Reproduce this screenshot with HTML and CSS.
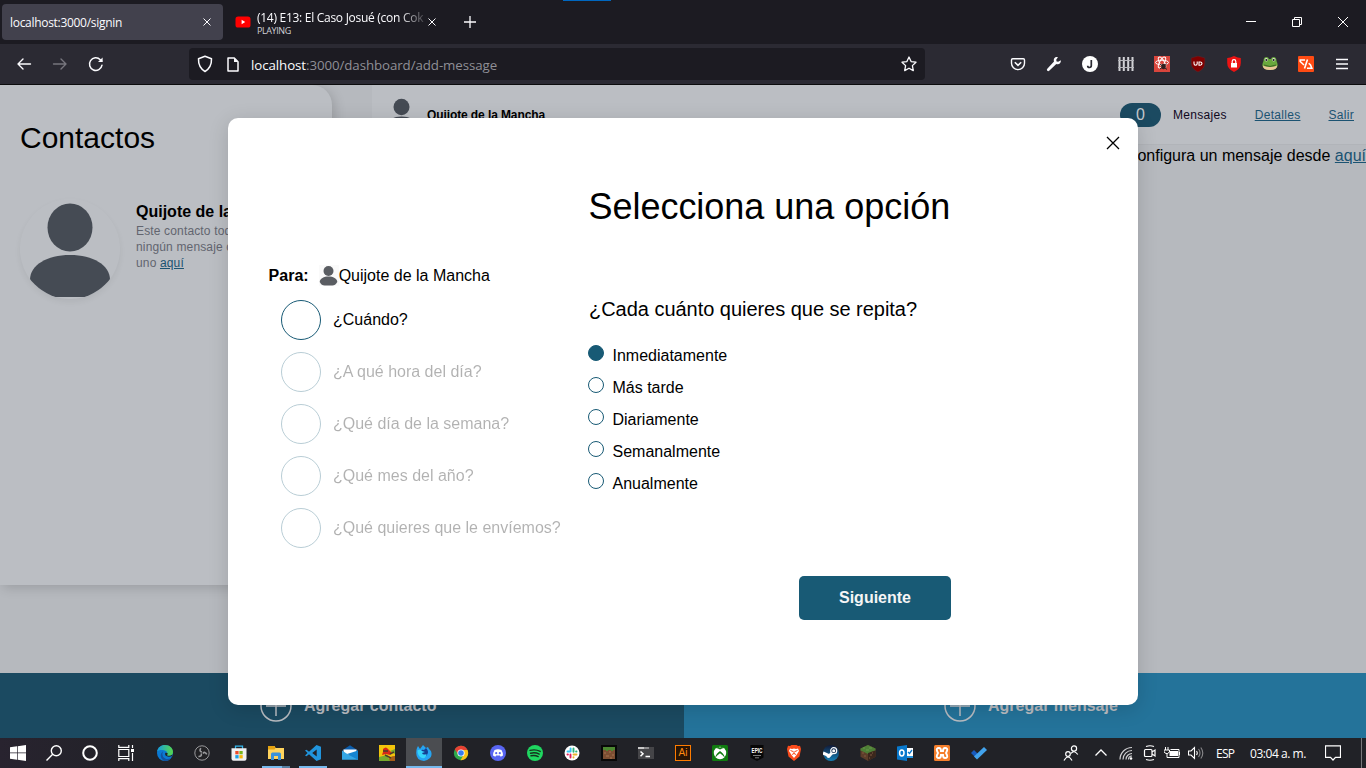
FILE: index.html
```html
<!DOCTYPE html>
<html lang="es">
<head>
<meta charset="utf-8">
<title>Contactos</title>
<link rel="stylesheet" href="styles.css">
</head>
<body>
<div class="tabs">
  <div class="tab tab-active"><span>localhost:3000/signin</span>
    <svg class="tab-close" width="8" height="8" viewBox="0 0 8 8"><path d="M.5.5l7 7M7.5.5l-7 7" stroke="#fbfbfe"/></svg>
  </div>
  <div class="tab tab-video">
    <svg width="16" height="16" viewBox="0 0 16 16"><rect x=".5" y="2.5" width="15" height="11" rx="2.6" fill="#f00"/><path d="M6.6 5.8v4.4L10.2 8z" fill="#fff"/></svg>
    <div class="video-text"><div class="video-title">(14) E13: El Caso Josué (con Cok</div><div class="playing">PLAYING</div></div>
    <svg class="tab-close" width="8" height="8" viewBox="0 0 8 8"><path d="M.5.5l7 7M7.5.5l-7 7" stroke="#fbfbfe"/></svg>
  </div>
  <svg class="new-tab" width="12" height="12" viewBox="0 0 12 12"><path d="M6 0v12M0 6h12" stroke="#fbfbfe" stroke-width="1.3"/></svg>
  <div class="loading"></div>
  <div class="win">
    <svg width="46" height="44" viewBox="0 0 46 44"><path d="M18 21.5h10" stroke="#fff"/></svg>
    <svg width="46" height="44" viewBox="0 0 46 44" fill="none" stroke="#fff"><path d="M18.5 19.5h7v7h-7zM20.500 19v-1.500h7v7H26"/></svg>
    <svg width="46" height="44" viewBox="0 0 46 44"><path d="M18 17l10 10M28 17L18 27" stroke="#fff"/></svg>
  </div>
</div>
<div class="toolbar">
  <div class="nav">
    <svg width="16" height="16" viewBox="0 0 16 16" fill="none" stroke="#fbfbfe" stroke-width="1.4" stroke-linecap="round" stroke-linejoin="round"><path d="M14.500 8H2M7 3L2 8l5 5"/></svg>
    <svg width="16" height="16" viewBox="0 0 16 16" fill="none" stroke="#77767e" stroke-width="1.4" stroke-linecap="round" stroke-linejoin="round"><path d="M1.500 8H14M9 3l5 5-5 5"/></svg>
    <svg width="16" height="16" viewBox="0 0 16 16" fill="none" stroke="#fbfbfe" stroke-width="1.5" stroke-linecap="round"><path d="M14 9.200a6.300 6.300 0 1 1-1.700-5.500l1.400 1.400"/><path d="M14.600 1.500v4.600H10z" fill="#fbfbfe" stroke="none"/></svg>
  </div>
  <div class="url">
    <svg width="16" height="18" viewBox="0 0 16 18" fill="none" stroke="#fbfbfe" stroke-width="1.5" stroke-linejoin="round"><path d="M8 1.200l6.500 2.600C14.700 9.500 13 13.500 8 16.500 3 13.500 1.300 9.500 1.500 3.800z"/></svg>
    <svg width="12" height="15" viewBox="0 0 12 15"><path d="M1 1h6.300L11 4.700V14H1z" fill="none" stroke="#fbfbfe" stroke-width="1.500" stroke-linejoin="round"/><path d="M7 1v4h4z" fill="#fbfbfe"/></svg>
    <div class="address"><b>localhost</b>:3000/dashboard/add-message</div>
    <svg class="star" width="16" height="16" viewBox="0 0 16 16"><path d="M8 1l2.100 4.600 4.900.6-3.600 3.400.9 5L8 12.200l-4.300 2.400.9-5L1 6.200l4.900-.6z" fill="none" stroke="#fbfbfe" stroke-width="1.300" stroke-linejoin="round"/></svg>
  </div>
  <div class="exts">
    <svg viewBox="0 0 16 16" fill="none" stroke="#fbfbfe" stroke-width="1.400"><path d="M2.700 2.700h10.600q1.200 0 1.200 1.200v3.400a6.500 6.300 0 0 1-13 0V3.900q0-1.200 1.200-1.200z"/><path d="M4.800 6.300L8 9.400l3.200-3.100" stroke-width="1.600"/></svg>
    <svg viewBox="0 0 16 16"><path d="M14.800 4.200l-2.600 1.600-1.600-.4-.4-1.600 1.700-2.600C9 .6 7.200 2.800 8 5.600L1.300 12.800a1.300 1.300 0 0 0 1.900 1.900L10.300 8c2.900.8 5-1 4.500-3.800z" fill="#fbfbfe"/></svg>
    <svg viewBox="0 0 16 16"><circle cx="8" cy="8" r="8" fill="#fff"/><path d="M9.300 4v5.600q0 1.900-1.800 1.900T5.700 9.700" stroke="#2b2a33" stroke-width="1.700" fill="none"/></svg>
    <svg viewBox="0 0 16 16"><path d="M1.500 1v14M5.800 1v14M10.200 1v14M14.500 1v14" stroke="#d2d2d6" stroke-width="2"/><path d="M0 4.500h16M0 11.500h16" stroke="#b4b4ba" stroke-width="1.200"/></svg>
    <svg viewBox="0 0 16 16"><path fill="#d9453c" d="M0 0h16v16H0z"/><g fill="none" stroke="#fff"><ellipse cx="8" cy="6.500" rx="6.500" ry="2.300"/><ellipse cx="8" cy="6.500" rx="6" ry="2.300" transform="rotate(60 8 6.500)"/><ellipse cx="8" cy="6.500" rx="6" ry="2.300" transform="rotate(120 8 6.500)"/></g><ellipse cx="9.500" cy="10.500" rx="2.300" ry="2.700" fill="#311e1d"/><path d="M6 8l7 5.500M6 13l6.500-5" stroke="#311e1d"/></svg>
    <svg viewBox="0 0 16 16"><path d="M8 0l6.800 2v5q0 6-6.800 9Q1.200 13 1.200 7V2z" fill="#800000" stroke="#5c2a30" stroke-width=".5"/><path d="M4 5.500v2q0 1.700 1.600 1.700T7.200 7.500v-2M9 6h1.200q1.800 0 1.800 1.600t-1.800 1.600H9z" fill="none" stroke="#fff" stroke-width="1.100"/></svg>
    <svg viewBox="0 0 16 16"><path d="M8 0q4 2 6.800 2v5q0 6-6.800 9Q1.200 13 1.200 7V2Q4 2 8 0z" fill="#ec1313"/><rect x="5" y="7" width="6" height="4.500" fill="#fff"/><path d="M6.200 7V5.500a1.800 1.800 0 0 1 3.600 0V7" fill="none" stroke="#fff" stroke-width="1.200"/></svg>
    <svg viewBox="0 0 16 16"><path d="M1.500 5Q1.500 1 4.500 1 6.500 1 7 3h2q.5-2 2.500-2 3 0 3 4 1.500 3 1 5-1 4-7.500 4T.5 10q-.5-2 1-5z" fill="#68a83c"/><path d="M.8 9.500Q8 12.500 15.200 9.500 15 14 8 14T.8 9.500z" fill="#e9c698"/><circle cx="4.300" cy="3.800" r="1.700" fill="#dfe6d0"/><circle cx="11.700" cy="3.800" r="1.700" fill="#dfe6d0"/><circle cx="4.400" cy="4" r="1.100" fill="#222"/><circle cx="11.600" cy="4" r="1.100" fill="#222"/><path d="M2 9Q8 12 14 9" fill="none" stroke="#34501f" stroke-width=".8"/></svg>
    <svg viewBox="0 0 16 16"><rect width="16" height="16" rx="1" fill="#ff4b13"/><path d="M7 4H2.200v1.500L6 9M9.500 3.500l-3 9M9 12.200h4.800L12.500 9 10.700 7.200" fill="none" stroke="#fff" stroke-width="1.600"/></svg>
    <svg viewBox="0 0 16 16"><path d="M2 3.500h12M2 8h12M2 12.500h12" stroke="#fbfbfe" stroke-width="1.300"/></svg>
  </div>
</div>

<div class="page">
  <div class="content">
    <aside class="contacts">
      <h1>Contactos</h1>
      <div class="contact">
        <div class="avatar"><svg width="100" height="100" viewBox="0 0 100 100"><ellipse cx="50" cy="28.500" rx="22.500" ry="24" fill="#454b54"/><path d="M10 81C10 66 27 56 50 56s40 10 40 25q-6 10-18 17H28Q16 91 10 81z" fill="#454b54"/></svg></div>
        <div class="contact-text"><b>Quijote de la Mancha</b><p>Este contacto todavía no tiene<br>ningún mensaje configurado,<br>uno <a>aquí</a></p></div>
      </div>
    </aside>
    <main class="board">
      <header class="board-head">
        <svg class="head-avatar" width="30" height="30" viewBox="0 0 30 30"><ellipse cx="14.500" cy="10" rx="8" ry="8.300" fill="#454b54"/><path d="M2 28q0-8.500 12.500-8.500T27 28z" fill="#454b54"/></svg>
        <b class="head-name">Quijote de la Mancha</b>
        <span class="count">0</span><span class="messages">Mensajes</span>
        <a class="details">Detalles</a><a>Salir</a>
      </header>
      <p class="hint">Configura un mensaje desde <a>aquí</a></p>
    </main>
  </div>
  <footer class="actions">
    <div class="action"><svg width="32" height="32" viewBox="0 0 32 32" fill="none" stroke="#b9bcc1" stroke-width="1.500"><circle cx="16" cy="16" r="15"/><path d="M16 6v20M6 16h20"/></svg><b>Agregar contacto</b></div>
    <div class="action action-message"><svg width="32" height="32" viewBox="0 0 32 32" fill="none" stroke="#b9bcc1" stroke-width="1.500"><circle cx="16" cy="16" r="15"/><path d="M16 6v20M6 16h20"/></svg><b>Agregar mensaje</b></div>
  </footer>

  <section class="modal">
    <svg class="modal-close" width="14" height="14" viewBox="0 0 14 14"><path d="M1 1l12 12M13 1L1 13" stroke="#000" stroke-width="1.300"/></svg>
    <div class="steps">
      <div class="to"><b>Para:</b><svg width="20" height="21" viewBox="0 0 20 21"><path d="M0 0h20v21H0z" fill="#fafafa"/><ellipse cx="9.500" cy="6" rx="5" ry="5" fill="#5a5d62"/><path d="M.7 17c0-7.500 17.600-7.500 17.600 0q-2 3.500-5 3.500H5.700Q2.500 20.500.7 17z" fill="#5a5d62"/></svg><span>Quijote de la Mancha</span></div>
      <ol>
        <li class="current"><i></i>¿Cuándo?</li>
        <li><i></i>¿A qué hora del día?</li>
        <li><i></i>¿Qué día de la semana?</li>
        <li><i></i>¿Qué mes del año?</li>
        <li><i></i>¿Qué quieres que le envíemos?</li>
      </ol>
    </div>
    <div class="form">
      <h2>Selecciona una opción</h2>
      <h3>¿Cada cuánto quieres que se repita?</h3>
      <div class="options">
        <label><i class="on"></i>Inmediatamente</label>
        <label><i></i>Más tarde</label>
        <label><i></i>Diariamente</label>
        <label><i></i>Semanalmente</label>
        <label><i></i>Anualmente</label>
      </div>
      <button class="next">Siguiente</button>
    </div>
  </section>
</div>

<div class="taskbar">
  <div class="system">
    <svg viewBox="0 0 16 16"><path d="M0 2.300L7 1.300V7.600H0zM7.700 1.200L16 0v7.600H7.700zM0 8.300h7v6.400l-7-1zM7.700 8.300H16V16l-8.300-1.200z" fill="#fff"/></svg>
    <svg viewBox="0 0 16 16" fill="none" stroke="#fff" stroke-width="1.400"><circle cx="10.300" cy="5.700" r="5"/><path d="M6.700 9.300L.5 15.500"/></svg>
    <svg viewBox="0 0 16 16"><circle cx="8" cy="8" r="6.800" fill="none" stroke="#fff" stroke-width="2"/></svg>
    <svg viewBox="0 0 16 16" fill="none" stroke="#fff" stroke-width="1.200"><path d="M.8 0v2.400h10V0M.8 4.500h10v7H.8zM.8 16v-2.400h10V16M14.500 0v3M14.500 8v8"/><path d="M13 4h3v3h-3z" fill="#fff" stroke="none"/></svg>
  </div>
  <div class="apps">
    <div><svg viewBox="0 0 16 16"><defs><linearGradient id="edge"><stop stop-color="#149be2"/><stop offset="1" stop-color="#57d948"/></linearGradient></defs><circle cx="8" cy="8" r="8" fill="#0a79d3"/><path d="M0 7C1 2 4 0 8 0c6 0 9 5 7.600 8.800-1 2.800-5 2.700-6.100 1.300 1.500-2 .2-4.500-2.500-4.900C4 4.800 1 5 0 7z" fill="url(#edge)"/><path d="M6.200 6.200q-2.400 4.500 2 7.300 3 1.500 6-.8-2.300 3.600-7 3.200C3 13.500 2.500 8.500 6.200 6.200z" fill="#12519f"/><path d="M8.300 7.800q-1.200 3.600 3.600 4 1.800 0 3.300-.7l.2-1.600q-2.500 2.100-5.500.8 1-.9.700-2.300z" fill="#202226"/></svg></div>
    <div><svg viewBox="0 0 16 16"><circle cx="8" cy="8" r="7.200" fill="#222225" stroke="#99999c"/><g fill="none" stroke="#9a9a9d" stroke-width="1.600"><path d="M8 7Q4.800 6.500 6.800 3.200"/><path d="M8 7Q4.800 6.500 6.800 3.200" transform="rotate(120 8 8)"/><path d="M8 7Q4.800 6.500 6.800 3.200" transform="rotate(240 8 8)"/></g></svg></div>
    <div><svg viewBox="0 0 16 16"><path d="M4.500 4V1.200h7V4" fill="none" stroke="#35b8ee" stroke-width="1.300"/><path d="M.5 3.200h15v10.500q0 2-2 2h-11q-2 0-2-2z" fill="#f0f0f2"/><path fill="#ed4b29" d="M4.300 6h3.300v3.300H4.300z"/><path fill="#79b51c" d="M8.400 6h3.300v3.300H8.400z"/><path fill="#1ba0e7" d="M4.300 10.100h3.300v3.300H4.300z"/><path fill="#f6b60b" d="M8.400 10.100h3.300v3.300H8.400z"/></svg></div>
    <div class="open open-many"><svg viewBox="0 0 16 16"><path d="M0 1h6.500l1 2H16v11H0z" fill="#ffd45d"/><path d="M0 1h6.500l1 2-1 1.500H0z" fill="#e5a210"/><path d="M3 15V9q0-1.500 1.500-1.500h7Q13 7.500 13 9v6h-3v-4H6v4z" fill="#3992da"/></svg></div>
    <div class="open"><svg viewBox="0 0 16 16"><path d="M11.500 0L16 1.800v12.400L11.500 16 4 9.300 1.500 11.300 0 10.400 2.600 8 0 5.600l1.500-.9L4 6.700zM11.700 4.500L7.200 8l4.500 3.500z" fill="#2195dd"/></svg></div>
    <div><svg viewBox="0 0 16 16"><path d="M0 5.500L8 .2l8 5.300z" fill="#0b5dac"/><path d="M1.500 4.500h13v6h-13z" fill="#fff"/><path d="M0 5.500l8 5.300 8-5.300v9.300H0z" fill="#35a7e5"/><path d="M16 5.500v9.300L5 9z" fill="#1685d0"/></svg></div>
    <div><svg viewBox="0 0 16 16"><path fill="#f2c40b" d="M0 0h16v16H0z"/><path d="M9 16q1-5 7-5v5z" fill="#a55d18"/><path d="M0 12l8-2 3 6H0zM11 6l5-2v5z" fill="#78a92d"/><path d="M4 4q3-3 5 0l4 4-2 2-4-1-4 1 1-3z" fill="#d72719"/><path d="M4 6h5M6 10l6 3M11 9l4-2" stroke="#473e2e" stroke-width="1.400"/></svg></div>
    <div class="open focused"><svg viewBox="0 0 16 16"><path d="M1 3l1-2 2 3 3-4 3 3 2-1 1 2q3 2 2.500 6T8 16Q.3 15.500.2 8 .1 5 1 3z" fill="#26a4f2"/><path d="M5 6q1-2 3-1l2-2q3 3 1.500 6T8 12Q5 11 5 6z" fill="#143f92"/><path d="M1.500 5.500Q4 4 6 6l3 1-3 1q1 2.500 4.500 1Q10 14 6 13 1.500 11.500 1.500 5.500z" fill="#36d5fb"/></svg></div>
    <div><svg viewBox="0 0 16 16"><circle cx="8" cy="8" r="7.200" fill="#2eaa4b"/><path d="M8 .8a7.200 7.200 0 0 1 6.500 4.200H8L5.200 9.500 1.800 4.300A7.200 7.200 0 0 1 8 .8z" fill="#e84133"/><path d="M14.500 5A7.200 7.200 0 0 1 7.500 15.200L10.500 10V5z" fill="#fbc116"/><circle cx="8" cy="8" r="3.600" fill="#fff"/><circle cx="8" cy="8" r="2.800" fill="#367cf0"/></svg></div>
    <div><svg viewBox="0 0 16 16"><circle cx="8" cy="8" r="8" fill="#5865f2"/><path d="M4.500 5Q8 3.500 11.500 5q1.700 3 1.500 5.500l-2.300 1.300-.8-1.200H6.100l-.8 1.200L3 10.500Q2.800 8 4.500 5z" fill="#fff"/><circle cx="6.200" cy="8.200" r="1.100" fill="#5865f2"/><circle cx="9.800" cy="8.200" r="1.100" fill="#5865f2"/></svg></div>
    <div><svg viewBox="0 0 16 16"><circle cx="8" cy="8" r="8" fill="#1fd760"/><path d="M3 5.400q5.500-1.500 10.200 1M3.500 8.200q4.800-1.200 8.700.9M4 10.800q4-.9 7.200.8" stroke="#17301f" stroke-width="1.400" fill="none" stroke-linecap="round"/></svg></div>
    <div><svg viewBox="0 0 16 16"><circle cx="8" cy="8" r="7.500" fill="#fff"/><g stroke-width="1.900" stroke-linecap="round"><path d="M6.600 3.500v3M3.500 6.500h3" stroke="#36c5f0"/><path d="M9.500 3.500v3.200M12.500 6.500h-.4" stroke="#2eb67d"/><path d="M9.500 9.500h3M9.500 12.500v-.4" stroke="#ecb22e"/><path d="M6.500 9.500v3M3.500 9.500h.4" stroke="#e01e5a"/></g></svg></div>
    <div><svg viewBox="0 0 16 16"><path fill="#080808" d="M0 0h16v16H0z"/><path fill="#7c4e32" d="M2 2h12v12H2z"/><path fill="#4c8831" d="M2 2h12v3h-2v1h-2V5H7v1H5V5H2z"/><path d="M3 8h2M8 7h2M11 10h2M5 11h3M9 13h2" stroke="#a57550"/></svg></div>
    <div><svg viewBox="0 0 16 16"><path fill="#454548" d="M0 2h16v12H0z"/><path fill="#c8c8c8" d="M0 2h6v2H0z"/><path fill="#8b8b8d" d="M6 2h5v2H6z"/><path d="M2.500 6.500L5 8.800l-2.500 2.400M7.500 11.500H12" stroke="#fff" stroke-width="1.500" fill="none"/></svg></div>
    <div><span class="ai">Ai</span></div>
    <div><svg viewBox="0 0 16 16"><rect width="16" height="16" rx="1.500" fill="#107c10"/><circle cx="8" cy="8" r="6.200" fill="#fff"/><path d="M3 13Q4 8.500 8 6q4 2.500 5 7-2.500-3.200-5-4.800Q5.500 9.800 3 13zM4 2.900q2 .1 4 1.500 2-1.400 4-1.500-2-1.400-4-.3-2-1.100-4 .3z" fill="#107c10"/></svg></div>
    <div><svg viewBox="0 0 16 16"><path d="M1.500 0h13v12.500L8 16l-6.500-3.500z" fill="#070707"/><text transform="translate(8 8) scale(.78 1.250)" text-anchor="middle" class="epic">EPIC</text><path d="M4 10.500h8M6 12.800h4" stroke="#999" stroke-width=".8"/></svg></div>
    <div><svg viewBox="0 0 16 16"><path d="M4 1l1.500-1h5L12 1l2-.2L15 4l-1.500 7.500L8 16l-5.500-4.500L1 4 2 .8z" fill="#fb4b1b"/><path d="M4 3.500l2 .5 2-.5 2 .5 2-.5L13 6l-2.500 4L8 13l-2.500-3L3 6z" fill="#fff"/><path d="M4.500 5.500L7 6.500M11.500 5.500L9 6.500M8 6v3M6 9.500l2-1 2 1" stroke="#fb4b1b" fill="none"/></svg></div>
    <div><svg viewBox="0 0 16 16"><defs><linearGradient id="steam" x2="0" y2="1"><stop stop-color="#111937"/><stop offset="1" stop-color="#1481b8"/></linearGradient></defs><circle cx="8" cy="8" r="8" fill="url(#steam)"/><path d="M0 8l5.500 2.300M5.500 11.500L11 6" stroke="#fff" stroke-width="3"/><circle cx="10.700" cy="5.700" r="3" fill="#173052" stroke="#fff" stroke-width="1.200"/><circle cx="10.700" cy="5.700" r="1.500" fill="#fff"/><circle cx="5.500" cy="11.300" r="1.800" fill="#fff"/></svg></div>
    <div><svg viewBox="0 0 16 16"><path d="M8 0l7.500 3.500v8.300L8 16 .5 11.800V3.500z" fill="#5c3d29"/><path d="M8 0l7.500 3.500v2L12 6.500 8 9 4 7 .5 5.500v-2z" fill="#4d7f36"/><path d="M8 8v8l7.500-4.200V5.500z" fill="#3b271c"/><path d="M2 8h2M4 11h2M10 10h2M12 8h1M9 13h1" stroke="#805a40"/><path d="M3 3h2M9 3h3M6 5h3" stroke="#679b4b"/></svg></div>
    <div><svg viewBox="0 0 16 16"><path fill="#fff" d="M8 3h8v10H8z"/><path d="M8 13V9l2 2h6v2z" fill="#2492dc"/><path fill="#0878cc" d="M0 1.500L10 0v16L0 14.500z"/><ellipse cx="4.800" cy="8" rx="2.200" ry="2.900" fill="none" stroke="#fff" stroke-width="1.500"/><path d="M11 7l1.500 1.500L15 5" stroke="#0878cc" stroke-width="1.300" fill="none"/></svg></div>
    <div><svg viewBox="0 0 16 16"><rect width="16" height="16" rx="1.500" fill="#f57f2c"/><path d="M5 3q2 0 2 3h2q0-3 2-3 3 0 2 3l-1 2 1 2q1 3-2 3-2 0-2-3H7q0 3-2 3-3 0-2-3l1-2-1-2q-1-3 2-3z" fill="none" stroke="#fff" stroke-width="1.900"/></svg></div>
    <div><svg viewBox="0 0 16 16"><path d="M0 8l3-3 5 5-3 3z" fill="#185abd"/><path d="M13 2l3 3-10 9.500-3-3z" fill="#42a3ed"/></svg></div>
  </div>
  <div class="tray">
    <svg class="people" viewBox="0 0 16 16" fill="none" stroke="#fff" stroke-width="1.200"><circle cx="11" cy="3.500" r="2.600"/><path d="M8 8.500q3-4 6.800 1"/><circle cx="5" cy="9" r="2.300"/><path d="M1 15.500q4-7 8 0"/></svg>
    <svg class="chevron" viewBox="0 0 16 16"><path d="M2.500 10.500L8 5l5.500 5.500" fill="none" stroke="#fff" stroke-width="1.300"/></svg>
    <svg class="wifi" viewBox="0 0 16 16" fill="none" stroke="#d0d0d2" stroke-width="1.200"><path d="M2 14.500A12 12 0 0 1 14 2.500M5 14.500a9 9 0 0 1 9-9M8 14.500a6 6 0 0 1 6-6M10.500 14.500a3.500 3.500 0 0 1 3.500-3.500"/><circle cx="13" cy="13.500" r="1.300" fill="#fff" stroke="none"/></svg>
    <svg class="meet" viewBox="0 0 16 16" fill="none" stroke="#fff" stroke-width="1.200"><rect x="2.500" y="4.500" width="7.500" height="7" rx="1"/><path d="M10 7l3-2v6l-3-2M4 1.500q4-1.500 8 0M4 14.500q4 1.500 8 0"/></svg>
    <svg class="battery" viewBox="0 0 16 16"><path d="M5.500 6h8.500v5H5.500z" fill="#fff"/><path d="M1.500 2v3M4 2v3M0 5h5.500v2L3.500 8.500H2L0 7zM3 8v4.500h12v-8H6.500M15.500 7v3" fill="none" stroke="#fff"/></svg>
    <svg class="sound" viewBox="0 0 16 16" fill="none" stroke="#fff" stroke-width="1.100"><path d="M.5 6h2.500l3.500-3.500v11L3 10H.5zM8.500 6q1.500 2 0 4"/><path d="M10.500 4q3 4 0 8M12.800 2.500q4 5.500 0 11" stroke="#88888b"/></svg>
    <span class="lang">ESP</span><span class="clock">03:04 a. m.</span>
    <svg class="notes" viewBox="0 0 16 16"><path d="M.5.8h15v11.500h-5L8 15l-2.500-2.700h-5z" fill="none" stroke="#fff" stroke-width="1.200"/></svg>
  </div>
</div>
</body>
</html>
```
FILE: styles.css
```css
* { box-sizing: border-box; }
body { margin: 0; width: 1366px; height: 768px; overflow: hidden; font-family: "Liberation Sans", Arial, sans-serif; display: flex; flex-direction: column; }
h1, h2, h3, p, ol { margin: 0; padding: 0; font-weight: 400; }
svg { display: block; flex: none; }

.tabs { height: 44px; background: #1c1b22; display: flex; align-items: center; color: #fbfbfe; font: 12px "Open Sans", sans-serif; position: relative; }
.tab { height: 36px; display: flex; align-items: center; }
.tab-active { width: 221px; margin-left: 2px; padding: 0 12px 0 8px; background: #42414d; border-radius: 4px; letter-spacing: -.3px; }
.tab-close { margin-left: auto; }
.tab-video { width: 213px; padding: 0 0 0 12px; }
.video-text { margin-left: 6px; width: 169px; white-space: nowrap; }
.video-title { line-height: 17px; letter-spacing: -.28px; -webkit-mask-image: linear-gradient(90deg, #000 84%, transparent 102%); mask-image: linear-gradient(90deg, #000 84%, transparent 102%); }
.playing { font-size: 9px; line-height: 10px; letter-spacing: -.4px; color: #d0d0d5; }
.new-tab { margin-left: 28px; }
.loading { position: absolute; left: 563px; top: 0; width: 48px; height: 1px; background: #0067c0; }
.win { display: flex; margin-left: auto; }

.toolbar { height: 41px; background: #2b2a33; border-bottom: 1px solid #0c0c0d; display: flex; align-items: center; }
.nav { width: 189px; padding-left: 16px; display: flex; gap: 20px; }
.url { width: 736px; height: 32px; background: #1c1b22; border-radius: 4px; display: flex; align-items: center; padding: 0 8px; }
.url svg:nth-child(2) { margin-left: 14px; }
.address { margin-left: 12px; padding-top: 2px; font: 13.3px/20px "Open Sans", sans-serif; color: #8f8f96; letter-spacing: -.08px; white-space: nowrap; }
.address b { font-weight: 400; color: #fbfbfe; }
.star { margin-left: auto; }
.exts { display: flex; gap: 20px; margin-left: 85px; }
.exts svg { width: 16px; height: 16px; }

.page { height: 653px; position: relative; background: #b6b9be; overflow: hidden; display: flex; flex-direction: column; }
.content { height: 588px; display: flex; }
.contacts { width: 332px; height: 500px; background: #bbbec3; border-radius: 0 20px 0 0; box-shadow: 3px 3px 12px rgba(0,0,0,.15); padding: 36px 20px 0; }
.contacts h1 { font-size: 30px; line-height: 34px; }
.contact { margin-top: 44px; display: flex; }
.avatar { width: 100px; height: 100px; border-radius: 50px; overflow: hidden; box-shadow: 0 3px 6px rgba(0,0,0,.06); flex: none; }
.contact-text { margin-left: 16px; padding-top: 3px; white-space: nowrap; width: 180px; }
.contact-text b { font-size: 16px; line-height: 20px; display: block; }
.contact-text p { font-size: 12px; line-height: 16px; color: #62656f; margin-top: 1px; letter-spacing: .15px; }
a { color: #1b5372; text-decoration: underline; }
.board { flex: 1; margin-left: 40px; }
.board-head { height: 60px; background: #bbbec3; border-bottom: 1px solid #b1b4b9; display: flex; align-items: center; padding: 0 12px 0 15px; font-size: 12px; }
.head-avatar { margin-top: -6px; }
.head-name { margin-left: 10px; letter-spacing: -.1px; }
.count { margin-left: auto; width: 41px; height: 24px; border-radius: 12px; background: #1b4a61; color: #c5c8cc; font-size: 16px; line-height: 24px; text-align: center; }
.messages { margin-left: 12px; color: #10081d; letter-spacing: .3px; }
.details { margin: 0 28px; }
.board-head a { letter-spacing: .3px; }
.hint { font-size: 16px; line-height: 20px; text-align: right; padding-top: 1px; }
.actions { height: 65px; display: flex; color: #b9bcc1; }
.action { width: 684px; background: #1b4a61; display: flex; align-items: center; padding-left: 260px; gap: 12px; }
.action-message { width: 682px; background: #24739a; }

.modal { position: absolute; left: 228px; top: 33px; width: 910px; height: 587px; background: #fff; border-radius: 10px; box-shadow: 0 4px 20px rgba(0,0,0,.15); display: flex; font-size: 16px; }
.modal-close { position: absolute; right: 18px; top: 18px; }
.steps { width: 360px; padding: 147px 0 0 40px; }
.to { display: flex; align-items: center; height: 21px; padding-left: .6px; }
.to svg { margin-left: 10px; }
.steps ol { list-style: none; margin: 14px 0 0 13px; display: flex; flex-direction: column; gap: 12px; }
.steps li { display: flex; align-items: center; gap: 12px; height: 40px; opacity: .3; white-space: nowrap; }
.steps .current { opacity: 1; }
.steps i { width: 40px; height: 40px; border: 1px solid #185a75; border-radius: 50%; }
.form { width: 363px; padding-top: 68px; display: flex; flex-direction: column; }
.form h2 { font-size: 36px; line-height: 42px; padding-left: .5px; white-space: nowrap; letter-spacing: -.03px; }
.form h3 { font-size: 20px; line-height: 24px; margin-top: 69px; padding-left: 1px; white-space: nowrap; letter-spacing: -.03px; }
.options { margin-top: 24px; display: flex; flex-direction: column; gap: 12px; }
.options label { display: flex; align-items: flex-start; height: 20px; line-height: 22px; gap: 8.5px; }
.options i { width: 16px; height: 16px; border: 1px solid #185a75; border-radius: 50%; }
.options .on { background: #185a75; }
.next { align-self: flex-end; width: 152px; height: 44px; margin-top: 83px; border: 0; border-radius: 5px; background: #185a75; color: #f5f5f5; font: bold 16px "Liberation Sans", Arial, sans-serif; }

.taskbar { height: 30px; background: #212227; display: flex; color: #fff; }
.system { display: flex; width: 147px; gap: 20px; padding: 7px 0 0 10px; background: linear-gradient(90deg, #28232f, #212227); }
.system svg, .apps svg { width: 16px; height: 16px; }
.apps { display: flex; gap: 1px; }
.apps div { width: 36px; height: 30px; padding: 7px 10px; }
.apps .open { position: relative; }
.open::after { content: ""; position: absolute; left: 4px; right: 4px; bottom: 0; height: 2px; background: #76b9ed; }
.open-many::after { background: linear-gradient(90deg, #76b9ed 70%, #557fa2 70%); }
.apps .focused { background: #4b4d51; }
.focused::after { left: 0; right: 0; }
.ai { display: block; width: 16px; height: 16px; border: 1px solid #ff7c00; background: #291505; color: #ff8b10; font-size: 10px; line-height: 14px; text-align: center; }
.epic { font: bold 6px "Liberation Sans", sans-serif; fill: #fff; }
.tray { margin-left: auto; margin-right: 4px; padding-right: 20px; border-right: 1px solid #77777a; display: flex; align-items: center; font: 12px "Open Sans", sans-serif; letter-spacing: -.45px; }
.tray svg { width: 16px; height: 16px; }
.chevron { margin-left: 14px; }
.wifi { margin-left: 9px; }
.meet { margin-left: 8px; }
.battery { margin-left: 6px; }
.sound { margin-left: 8px; }
.lang { margin-left: 12px; width: 20px; letter-spacing: -.7px; }
.clock { margin-left: 14px; width: 58px; white-space: nowrap; }
.tray .notes { margin-left: 17px; }
```
